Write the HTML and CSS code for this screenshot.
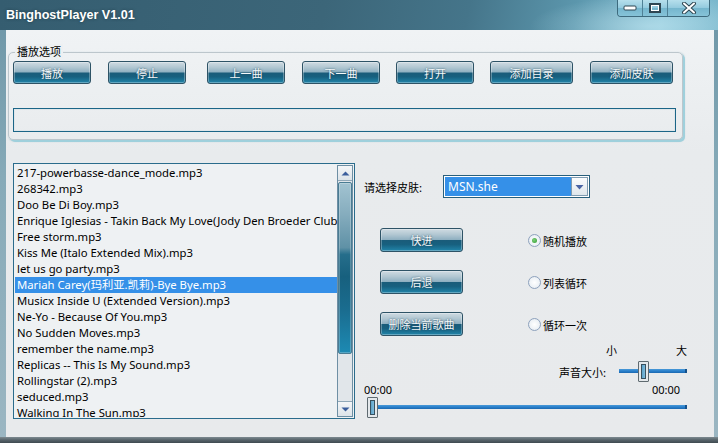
FILE: index.html
```html
<!DOCTYPE html>
<html lang="zh-CN">
<head>
<meta charset="utf-8">
<title>BinghostPlayer V1.01</title>
<link rel="stylesheet" href="styles.css">
</head>
<body>
<div class="window">
  <div class="titlebar">
    <span class="title">BinghostPlayer V1.01</span>
    <div class="caption">
      <div class="cap cap-min"><svg width="14" height="8" viewBox="0 0 14 8"><rect x="1" y="2" width="12" height="4" rx="1" fill="#fff" stroke="#2e4652" stroke-width="1"/></svg></div>
      <div class="cap cap-max"><svg width="12" height="10" viewBox="0 0 12 10"><rect x="1" y="1" width="10" height="8" fill="none" stroke="#2e4652" stroke-width="2"/><rect x="2.5" y="2.5" width="7" height="5" fill="none" stroke="#fff" stroke-width="1"/></svg></div>
      <div class="cap cap-close"><svg width="16" height="12" viewBox="0 0 16 12"><path d="M3 1.5 L13 10.5 M13 1.5 L3 10.5" stroke="#2e4652" stroke-width="4" stroke-linecap="round"/><path d="M3 1.5 L13 10.5 M13 1.5 L3 10.5" stroke="#fff" stroke-width="2" stroke-linecap="round"/></svg></div>
    </div>
  </div>
  <div class="client">
    <div class="group">
      <span class="legend">播放选项</span>
      <div class="btn-row">
        <button class="btn">播放</button>
        <button class="btn gap-17">停止</button>
        <button class="btn gap-21">上一曲</button>
        <button class="btn gap-17">下一曲</button>
        <button class="btn">打开</button>
        <button class="btn wide">添加目录</button>
        <button class="btn wide gap-17">添加皮肤</button>
      </div>
      <div class="status-box"></div>
    </div>
    <div class="lower">
      <div class="listbox">
        <ul class="items">
          <li>217-powerbasse-dance_mode.mp3</li>
          <li>268342.mp3</li>
          <li>Doo Be Di Boy.mp3</li>
          <li>Enrique Iglesias - Takin Back My Love(Jody Den Broeder Club Mix).mp3</li>
          <li>Free storm.mp3</li>
          <li>Kiss Me (Italo Extended Mix).mp3</li>
          <li>let us go party.mp3</li>
          <li class="selected">Mariah Carey(玛利亚.凯莉)-Bye Bye.mp3</li>
          <li>Musicx Inside U (Extended Version).mp3</li>
          <li>Ne-Yo - Because Of You.mp3</li>
          <li>No Sudden Moves.mp3</li>
          <li>remember the name.mp3</li>
          <li>Replicas -- This Is My Sound.mp3</li>
          <li>Rollingstar (2).mp3</li>
          <li>seduced.mp3</li>
          <li>Walking In The Sun.mp3</li>
        </ul>
        <div class="scrollbar">
          <div class="sb-arrow"><svg width="9" height="5" viewBox="0 0 9 5"><path d="M0.5 4.5 L4.5 0.5 L8.5 4.5 Z" fill="#3b5e9c"/></svg></div>
          <div class="sb-track">
            <div class="sb-thumb"></div>
          </div>
          <div class="sb-arrow"><svg width="9" height="5" viewBox="0 0 9 5"><path d="M0.5 0.5 L4.5 4.5 L8.5 0.5 Z" fill="#3b5e9c"/></svg></div>
        </div>
      </div>
      <div class="panel">
        <div class="skin-row">
          <span class="skin-label">请选择皮肤:</span>
          <div class="combo">
            <span class="combo-value">MSN.she</span>
            <span class="combo-drop"><svg width="9" height="6" viewBox="0 0 9 6"><path d="M0.5 1 L8.5 1 L4.5 5.5 Z" fill="#4a64a4"/></svg></span>
          </div>
        </div>
        <div class="actions">
          <button class="btn side">快进</button>
          <label class="radio checked"><span class="dot"></span>随机播放</label>
          <button class="btn side">后退</button>
          <label class="radio"><span class="dot"></span>列表循环</label>
          <button class="btn side">删除当前歌曲</button>
          <label class="radio"><span class="dot"></span>循环一次</label>
        </div>
        <div class="vol-scale"><span>小</span><span>大</span></div>
        <div class="vol-row">
          <span class="vol-label">声音大小:</span>
          <div class="slider vol">
            <div class="track"></div>
            <div class="thumb" style="left: 19px"><span></span></div>
          </div>
        </div>
        <div class="time-row"><span>00:00</span><span>00:00</span></div>
        <div class="slider seek">
          <div class="track"></div>
          <div class="thumb" style="left: 0px"><span></span></div>
        </div>
      </div>
    </div>
  </div>
</div>
</body>
</html>
```

FILE: styles.css
```css
* { box-sizing: border-box; }

html, body {
  margin: 0;
  padding: 0;
  background: #e9ecee;
}

body {
  font-family: "Noto Sans", "Noto Sans CJK SC", sans-serif;
  font-size: 11px;
  color: #000;
}

.window {
  width: 718px;
  height: 443px;
  display: flex;
  flex-direction: column;
  background: linear-gradient(180deg, #6c95a6 0%, #86aab8 40%, #9bb6c2 100%);
  padding: 0 4px 6px 6px;
  position: relative;
  overflow: hidden;
}

.window::after {
  content: "";
  position: absolute;
  left: 0;
  right: 0;
  bottom: 0;
  height: 6px;
  background: linear-gradient(180deg, #7d8a90 0%, #56636a 50%, #3f4a50 100%);
}

.titlebar {
  height: 30px;
  margin: 0 -4px 0 -6px;
  display: flex;
  justify-content: space-between;
  align-items: flex-start;
  background:
    radial-gradient(ellipse 120px 30px at 650px 26px, rgba(200, 235, 245, 0.55), rgba(200, 235, 245, 0) 100%),
    linear-gradient(100deg, #355d70 0%, #3c6679 45%, #45758a 65%, #5c97ad 80%, #8cc5d8 92%, #78b6cb 100%);
}

.title {
  font-family: "Liberation Sans", "Noto Sans", sans-serif;
  font-weight: bold;
  font-size: 12.6px;
  color: #fff;
  padding: 8px 0 0 6px;
  line-height: 14px;
  text-shadow: 0 0 3px rgba(20, 40, 50, 0.6);
}

.caption {
  display: flex;
  margin-right: 8px;
  height: 17px;
  border: 1px solid #3d6a7d;
  border-top: 0;
  border-radius: 0 0 4px 4px;
  overflow: hidden;
}

.cap {
  height: 16px;
  display: flex;
  align-items: center;
  justify-content: center;
  background: linear-gradient(180deg, #b6dfec 0%, #93cade 50%, #75b6cd 51%, #86c3d8 100%);
  border-right: 1px solid #4f8196;
}

.cap:last-child { border-right: 0; }
.cap-min, .cap-max { width: 25px; }
.cap-close { width: 41px; }

.client {
  flex: 1;
  background: linear-gradient(180deg, #f0f3f5 0%, #e8ebed 30%, #e8eaec 100%);
  display: flex;
  flex-direction: column;
}

/* group box */
.group {
  position: relative;
  margin: 22px 0 0 2px;
  width: 675px;
  height: 88px;
  border: 1px solid #bcc6cc;
  border-radius: 5px;
  box-shadow: 2px 2px 0 #9fd0dc, 1px 1px 2px rgba(60, 130, 150, 0.5);
  padding: 8px 0 0 4px;
}

.legend {
  position: absolute;
  left: 6px;
  top: -9px;
  padding: 0 2px;
  line-height: 14px;
  background: #edf0f2;
  font-family: "Noto Sans CJK SC", sans-serif;
}

.btn-row {
  display: flex;
  gap: 16px;
}

.btn {
  font-family: "Noto Sans CJK SC", sans-serif;
  font-size: 11px;
  width: 78px;
  height: 23px;
  padding: 0;
  border: 1px solid #2e5366;
  border-radius: 3px;
  color: #f4f8fa;
  text-shadow: 0 0 2px #1f4558;
  background: linear-gradient(180deg, #cfdbe2 0%, #b2c7d2 25%, #8fb0c1 48%, #1a5c7a 52%, #17607f 70%, #2185aa 100%);
  box-shadow: inset 0 0 0 1px rgba(255, 255, 255, 0.3);
  line-height: 20px;
}

.btn.wide { width: 83px; }
.btn-row .gap-17 { margin-left: 1px; }
.btn-row .gap-21 { margin-left: 5px; }

.status-box {
  margin-top: 24px;
  width: 663px;
  height: 24px;
  border: 1px solid #1b6587;
  box-shadow: inset 0 0 0 1px #dfe6ea;
}

/* lower */
.lower {
  display: flex;
  margin-top: 23px;
  padding-left: 7px;
}

.listbox {
  width: 342px;
  height: 256px;
  border: 1px solid #2a6c8c;
  background: #eef1f3;
  display: flex;
  padding: 1px;
}

.items {
  list-style: none;
  margin: 0;
  padding: 0;
  flex: 1;
  overflow: hidden;
  min-width: 0;
}

.items li {
  height: 16px;
  line-height: 16px;
  padding-left: 2px;
  white-space: nowrap;
  overflow: hidden;
  font-size: 11.3px;
}

.items li.selected {
  background: #3590e8;
  color: #fff;
}

.scrollbar {
  width: 16px;
  display: flex;
  flex-direction: column;
  border: 1px solid #6e8fa4;
  background: #e1e6ea;
}

.sb-arrow {
  height: 15px;
  display: flex;
  align-items: center;
  justify-content: center;
  background: linear-gradient(180deg, #f4f6f8, #dde4e9);
  border-bottom: 1px solid #90a8b8;
}

.sb-arrow:last-child {
  border-bottom: 0;
  border-top: 1px solid #90a8b8;
}

.sb-track {
  flex: 1;
  padding: 1px 0;
}

.sb-thumb {
  height: 172px;
  border: 1px solid #4a7c93;
  border-radius: 2px;
  background: linear-gradient(180deg, #a2c3d1 0%, #86adbe 18%, #5f91a6 38%, #266e8b 42%, #17607e 55%, #1a6d90 75%, #1d8ab3 100%);
  box-shadow: inset 0 0 0 1px rgba(255, 255, 255, 0.25);
}

/* right panel */
.panel {
  margin-left: 9px;
  width: 326px;
  display: flex;
  flex-direction: column;
  font-family: "Noto Sans CJK SC", sans-serif;
}

.skin-row {
  display: flex;
  align-items: center;
  margin-top: 12px;
  height: 23px;
}

.skin-label {
  width: 79px;
}

.combo {
  width: 147px;
  height: 23px;
  border: 1px solid #285f7c;
  padding: 1px;
  background: #fff;
  display: flex;
}

.combo-value {
  flex: 1;
  background: #3590e8;
  color: #fff;
  font-family: "Noto Sans", sans-serif;
  font-size: 12px;
  line-height: 19px;
  padding-left: 3px;
}

.combo-drop {
  width: 17px;
  display: flex;
  align-items: center;
  justify-content: center;
  border: 1px solid #7f9bb0;
  background: linear-gradient(180deg, #fbfcfd, #dfe6eb);
}

.actions {
  margin-top: 30px;
  padding-left: 16px;
  display: grid;
  grid-template-columns: 83px auto;
  column-gap: 65px;
  row-gap: 18px;
  justify-content: start;
}

.btn.side {
  width: 83px;
  height: 24px;
}

.radio {
  display: flex;
  align-items: center;
  gap: 2px;
  margin-top: 5px;
  height: 15px;
}

.radio .dot {
  width: 13px;
  height: 13px;
  border-radius: 50%;
  border: 1px solid #8ea2bd;
  background: radial-gradient(circle at 50% 50%, #ffffff 0%, #eef2f6 60%, #d8e0ea 100%);
  display: flex;
  align-items: center;
  justify-content: center;
}

.radio.checked .dot::after {
  content: "";
  width: 5px;
  height: 5px;
  border-radius: 50%;
  background: radial-gradient(circle at 40% 40%, #7ed07a, #2e9a2e);
}

.vol-scale {
  display: flex;
  justify-content: space-between;
  margin: 7px 0 0 242px;
  width: 81px;
  line-height: 15px;
  height: 15px;
}

.vol-row {
  display: flex;
  align-items: center;
  margin: 3px 0 0 195px;
  height: 21px;
}

.vol-label {
  width: 60px;
}

.slider {
  position: relative;
  height: 21px;
}

.slider .track {
  position: absolute;
  left: 0;
  right: 0;
  top: 8px;
  height: 4px;
  background: linear-gradient(180deg, #4a9ad8 0%, #2a80cc 50%, #1b68b0 100%);
  border-right: 2px solid #14508a;
}

.slider .thumb {
  position: absolute;
  top: 0;
  width: 11px;
  height: 21px;
  border: 1px solid #5f6a70;
  border-radius: 1px;
  background: #e4e8eb;
  padding: 2px;
}

.slider .thumb span {
  display: block;
  width: 100%;
  height: 100%;
  border: 1px solid #38505e;
  background: linear-gradient(90deg, #5da2c8, #7dbadb);
}

.slider.vol {
  width: 68px;
}

.time-row {
  display: flex;
  justify-content: space-between;
  width: 316px;
  margin-top: 1px;
  height: 14px;
  line-height: 14px;
  font-family: "Noto Sans", sans-serif;
  font-size: 11px;
}

.slider.seek {
  width: 320px;
  margin-left: 3px;
}

.slider.seek .track {
  left: 5px;
}
```
